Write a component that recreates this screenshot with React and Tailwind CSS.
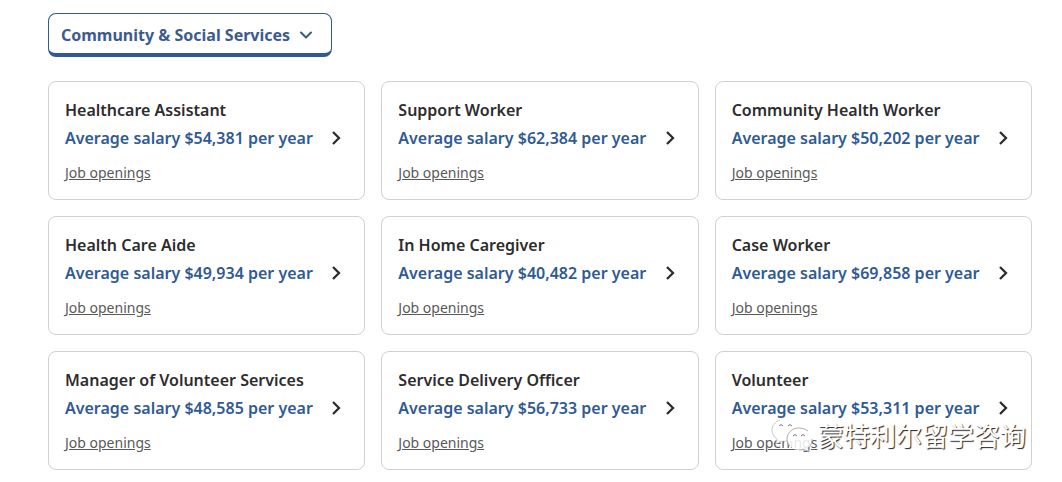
import { useState } from "react";
import { ChevronDown, ChevronRight } from "lucide-react";

const categories = ["Community & Social Services"];

const jobs = [
  { title: "Healthcare Assistant", salary: "$54,381" },
  { title: "Support Worker", salary: "$62,384" },
  { title: "Community Health Worker", salary: "$50,202" },
  { title: "Health Care Aide", salary: "$49,934" },
  { title: "In Home Caregiver", salary: "$40,482" },
  { title: "Case Worker", salary: "$69,858" },
  { title: "Manager of Volunteer Services", salary: "$48,585" },
  { title: "Service Delivery Officer", salary: "$56,733" },
  { title: "Volunteer", salary: "$53,311" },
];

function JobCard({ job }) {
  return (
    <li className="rounded-lg border border-[#d0d0d0] bg-white p-4">
      <div className="flex items-end justify-between">
        <div>
          <h2 className="mb-1 text-base font-semibold text-[#2d2d2d]">
            {job.title}
          </h2>
          <p className="text-base font-semibold text-[#2f5a94]">
            Average salary {job.salary} per year
          </p>
        </div>
        <button
          aria-label={`View ${job.title}`}
          className="flex size-6 items-center justify-center"
        >
          <ChevronRight
            className="size-6 text-[#2d2d2d]"
            strokeWidth={2.3}
            strokeLinecap="butt"
            strokeLinejoin="miter"
          />
        </button>
      </div>
      <a
        href="#"
        className="mt-3 inline-block align-top text-sm leading-[21px] text-[#595959] underline"
      >
        Job openings
      </a>
    </li>
  );
}

function Watermark() {
  return (
    <div className="pointer-events-none absolute right-9 bottom-7 flex items-center gap-1">
      <svg width="44" height="38" viewBox="0 0 44 38">
        <path
          d="M17 2C8 2 2 7 2 14c0 4 2 7 5 9l-1 5 6-3c2 .6 5 .7 8 .4C33 23 31 2 17 2Z"
          fill="#fff"
          fillOpacity="0.85"
        />
        <path
          d="M10 4C5 6 2 10 2 14c0 4 2 7 5 9l-1 5 6-3"
          fill="none"
          stroke="#bbb"
          strokeWidth="0.8"
        />
        <path
          d="M29 12c-7 0-12 5-12 11s5 11 12 11c2 0 4-.4 5-1l5 3-1-4c3-2 4-5 4-9 0-6-6-11-13-11Z"
          fill="#fff"
          fillOpacity="0.85"
        />
        <path
          d="M38 15c-3-2-6-3-9-3-7 0-12 5-12 11 0 3 1 5 3 7M29 34c2 0 4-.4 5-1l5 3-1-4c3-2 4-5 4-9"
          fill="none"
          stroke="#999"
          strokeWidth="0.8"
        />
        <path
          d="M9 10q2-3 4 0M18 10q2-3 4 0M23 20q2-3 4 0M31 20q2-3 4 0"
          fill="none"
          stroke="#777"
          strokeWidth="1"
        />
      </svg>
      <span className="font-['Noto_Sans_CJK_SC',sans-serif] text-[26px] leading-6 text-white [text-shadow:1px_1px_1px_#222222]">
        蒙特利尔留学咨询
      </span>
    </div>
  );
}

export default function App() {
  const [category, setCategory] = useState(categories[0]);

  return (
    <main className="relative bg-white pt-[13px] pr-[30px] pb-3 pl-12 font-['Noto_Sans',sans-serif]">
      <div className="mb-6 grid w-fit items-center">
        <select
          aria-label="Job category"
          value={category}
          onChange={(e) => setCategory(e.target.value)}
          className="col-start-1 row-start-1 h-11 appearance-none rounded-lg border border-b-4 border-[#2f5a94] bg-white pt-0.5 pr-10 pl-3 text-base font-bold text-[#3b5b8f]"
        >
          {categories.map((c) => (
            <option key={c}>{c}</option>
          ))}
        </select>
        <ChevronDown
          className="pointer-events-none col-start-1 row-start-1 mr-4 size-5 justify-self-end text-[#3b5b8f]"
          strokeWidth={2.5}
        />
      </div>

      <ul className="grid grid-cols-3 gap-4">
        {jobs.map((job) => (
          <JobCard key={job.title} job={job} />
        ))}
      </ul>

      <Watermark />
    </main>
  );
}
